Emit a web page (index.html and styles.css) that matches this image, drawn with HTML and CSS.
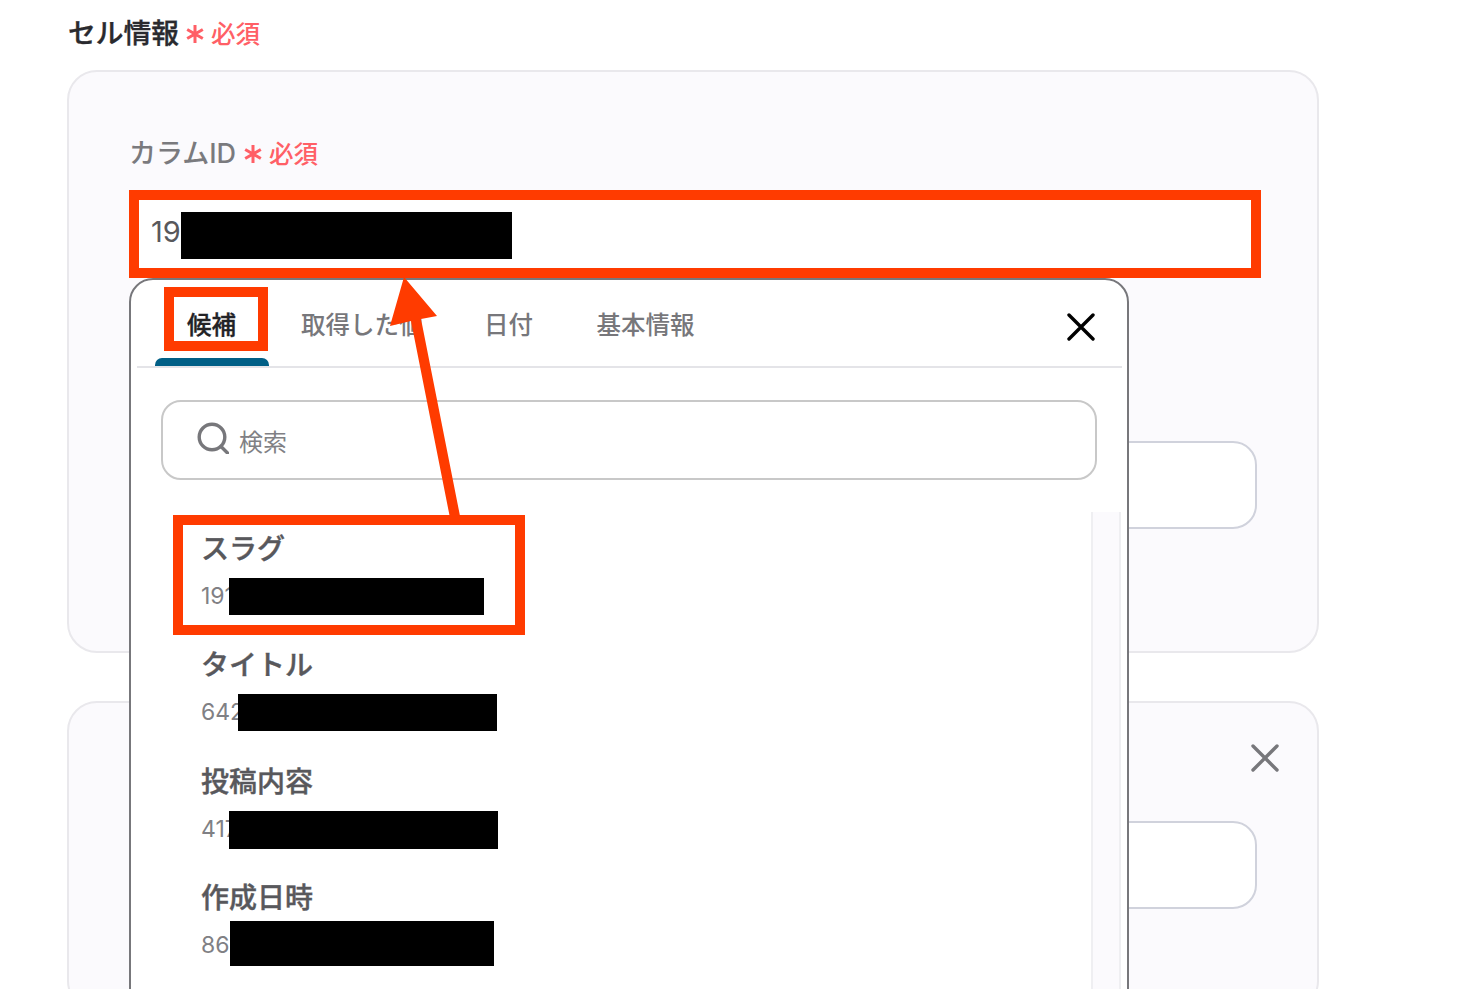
FILE: index.html
```html
<!DOCTYPE html>
<html lang="ja">
<head>
<meta charset="utf-8">
<title>セル情報</title>
<link rel="stylesheet" href="styles.css">
</head>
<body>
<main class="page">
  <h2 class="section-title">セル情報
    <svg class="asterisk" viewBox="0 0 18 18"><path d="M9 0v18M1.2 4.5l15.6 9M16.8 4.5l-15.6 9"/></svg>
    <span class="required">必須</span>
  </h2>

  <section class="card card-first">
    <div class="field-label">カラムID
      <svg class="asterisk" viewBox="0 0 18 18"><path d="M9 0v18M1.2 4.5l15.6 9M16.8 4.5l-15.6 9"/></svg>
      <span class="required">必須</span>
    </div>
    <div class="input input-marked">19<span class="redact redact-input"></span></div>
    <div class="input input-second"></div>
  </section>

  <section class="card card-second">
    <svg class="close close-gray" viewBox="0 0 28 28"><path d="M2 2l24 24M26 2L2 26"/></svg>
    <div class="input input-third"></div>
  </section>
</main>

<div class="popup">
  <div class="tabs">
    <div class="tab tab-active">候補</div>
    <div class="tab tab-fetched">取得した値</div>
    <div class="tab tab-date">日付</div>
    <div class="tab">基本情報</div>
    <svg class="close close-black" viewBox="0 0 28 28"><path d="M2 2l24 24M26 2L2 26"/></svg>
  </div>
  <div class="search">
    <svg class="search-icon" viewBox="0 0 32 32"><circle cx="15" cy="15" r="12.8"/><path d="M24.5 25l6 6"/></svg>
    <span class="search-text">検索</span>
  </div>
  <div class="list-area">
    <div class="list">
      <div class="item">
        <div class="item-label">スラグ</div>
        <div class="item-value">191<span class="redact redact-a"></span></div>
      </div>
      <div class="item">
        <div class="item-label">タイトル</div>
        <div class="item-value">642<span class="redact redact-b"></span></div>
      </div>
      <div class="item">
        <div class="item-label">投稿内容</div>
        <div class="item-value">417<span class="redact redact-c"></span></div>
      </div>
      <div class="item">
        <div class="item-label">作成日時</div>
        <div class="item-value">86<span class="redact redact-d"></span></div>
      </div>
    </div>
    <div class="scrollbar"></div>
  </div>
  <div class="mark mark-tab"></div>
  <div class="mark mark-item"></div>
</div>

<svg class="arrow" viewBox="0 0 1475 989">
  <path d="M404 277L437 316L421 319L461 521L451 523L411 321L390 326Z"/>
</svg>
</body>
</html>
```

FILE: styles.css
```css
* { box-sizing: border-box; }

html, body { margin: 0; padding: 0; }

body {
  position: relative;
  width: 1475px;
  height: 989px;
  overflow: hidden;
  background: #fff;
  font-family: "Inter", "Noto Sans CJK JP", sans-serif;
  color: #2a2a2e;
}

.page { padding-left: 67px; }

.section-title {
  display: flex;
  align-items: center;
  height: 62px;
  margin: 0 0 8px 1px;
  font-size: 27.75px;
  font-weight: 500;
  -webkit-text-stroke: 0.35px #2a2a2e;
  color: #2a2a2e;
}

.asterisk {
  width: 18px;
  height: 18px;
  margin: 5px 7px 0 8px;
  fill: none;
  stroke: #ff5f66;
  stroke-width: 3;
}

.section-title .asterisk { margin-left: 7px; }

.required {
  margin-top: 2px;
  font-size: 24.5px;
  font-weight: 500;
  -webkit-text-stroke: 0;
  color: #ff5f66;
}

.card {
  width: 1252px;
  background: #fbfafd;
  border: 2px solid #e9e8ec;
  border-radius: 30px;
}

.card-first { padding: 59px 38px 122px 61px; }

.card-second {
  display: flex;
  flex-direction: column;
  margin-top: 48px;
  padding: 41px 38px 100px 61px;
}

.field-label {
  display: flex;
  align-items: center;
  height: 40px;
  margin: 0 0 19px -1px;
  font-size: 27px;
  font-weight: 500;
  color: #7a7a7e;
}

.input {
  position: relative;
  width: 1127px;
  height: 88px;
  background: #fff;
  border: 2px solid #d0d2dc;
  border-radius: 24px;
}

.input-marked {
  width: 1132px;
  height: 88px;
  margin-left: -1px;
  padding-left: 12px;
  border: 10px solid #ff3b00;
  border-radius: 0;
  font-size: 29px;
  line-height: 64px;
  color: #58585c;
}

.input-second { margin-top: 163px; }

.input-third { margin-top: 49px; }

.close {
  width: 28px;
  height: 28px;
  fill: none;
  stroke-linecap: round;
}

.close-gray {
  align-self: flex-end;
  stroke: #77777b;
  stroke-width: 3.4;
}

.close-black {
  margin: 33px 27px 0 auto;
  stroke: #000;
  stroke-width: 3.4;
}

.popup {
  position: absolute;
  left: 129px;
  top: 278px;
  display: flex;
  flex-direction: column;
  width: 1000px;
  height: 760px;
  background: #fff;
  border: 2px solid #77777b;
  border-radius: 24px;
}

.tabs {
  display: flex;
  height: 88px;
  margin: 0 5px 0 6px;
  padding-left: 18px;
  border-bottom: 2px solid #e4e4e8;
}

.tab {
  display: flex;
  flex-direction: column;
  padding: 30px 31px 0;
  font-size: 24.5px;
  line-height: 30px;
  font-weight: 500;
  color: #77777b;
}

.tab-fetched { padding-right: 29.5px; }

.tab-date { padding-right: 32.5px; }

.tab-active {
  position: relative;
  margin-right: 1px;
  padding: 30px 33px 0 32px;
  -webkit-text-stroke: 0.35px #222226;
  color: #222226;
}

.tab-active::after {
  content: "";
  position: absolute;
  left: 0;
  right: 0;
  bottom: 0;
  height: 8px;
  background: #005f86;
  border-radius: 7px 7px 0 0;
}

.search {
  display: flex;
  align-items: center;
  width: 936px;
  height: 80px;
  margin: 32px 0 0 30px;
  padding-left: 34px;
  border: 2px solid #c8c8c8;
  border-radius: 20px;
}

.search-icon {
  width: 32px;
  height: 32px;
  margin-top: -4px;
  fill: none;
  stroke: #77777b;
  stroke-width: 3.4;
  stroke-linecap: round;
}

.search-text {
  margin-left: 10px;
  font-size: 24px;
  color: #808084;
}

.list-area {
  display: flex;
  flex: 1;
  margin-top: 32px;
}

.list {
  flex: 1;
  padding: 17px 0 0 70px;
}

.scrollbar {
  width: 30px;
  margin-right: 6px;
  background: #fbfafd;
  border-left: 2px solid #efeff2;
  border-right: 2px solid #efeff2;
}

.item { height: 116.33px; }

.item-label {
  height: 40px;
  margin-bottom: 7px;
  font-size: 28px;
  line-height: 40px;
  font-weight: 500;
  -webkit-text-stroke: 0.4px #58585c;
  color: #58585c;
}

.item-value {
  position: relative;
  height: 40px;
  font-size: 23px;
  line-height: 40px;
  color: #808084;
}

.redact {
  position: absolute;
  display: block;
  background: #000;
}

.redact-input { left: 42px; top: 12px; width: 331px; height: 47px; }
.redact-a { left: 28px; top: 2px; width: 255px; height: 37px; }
.redact-b { left: 37px; top: 2px; width: 259px; height: 37px; }
.redact-c { left: 28px; top: 2px; width: 269px; height: 38px; }
.redact-d { left: 29px; top: -4px; width: 264px; height: 45px; }

.mark {
  position: absolute;
  border: 10px solid #ff3b00;
}

.mark-tab { left: 33px; top: 7px; width: 104px; height: 64px; }
.mark-item { left: 42px; top: 235px; width: 352px; height: 120px; }

.arrow {
  position: absolute;
  left: 0;
  top: 0;
  width: 1475px;
  height: 989px;
  fill: #ff3b00;
  pointer-events: none;
}
```
